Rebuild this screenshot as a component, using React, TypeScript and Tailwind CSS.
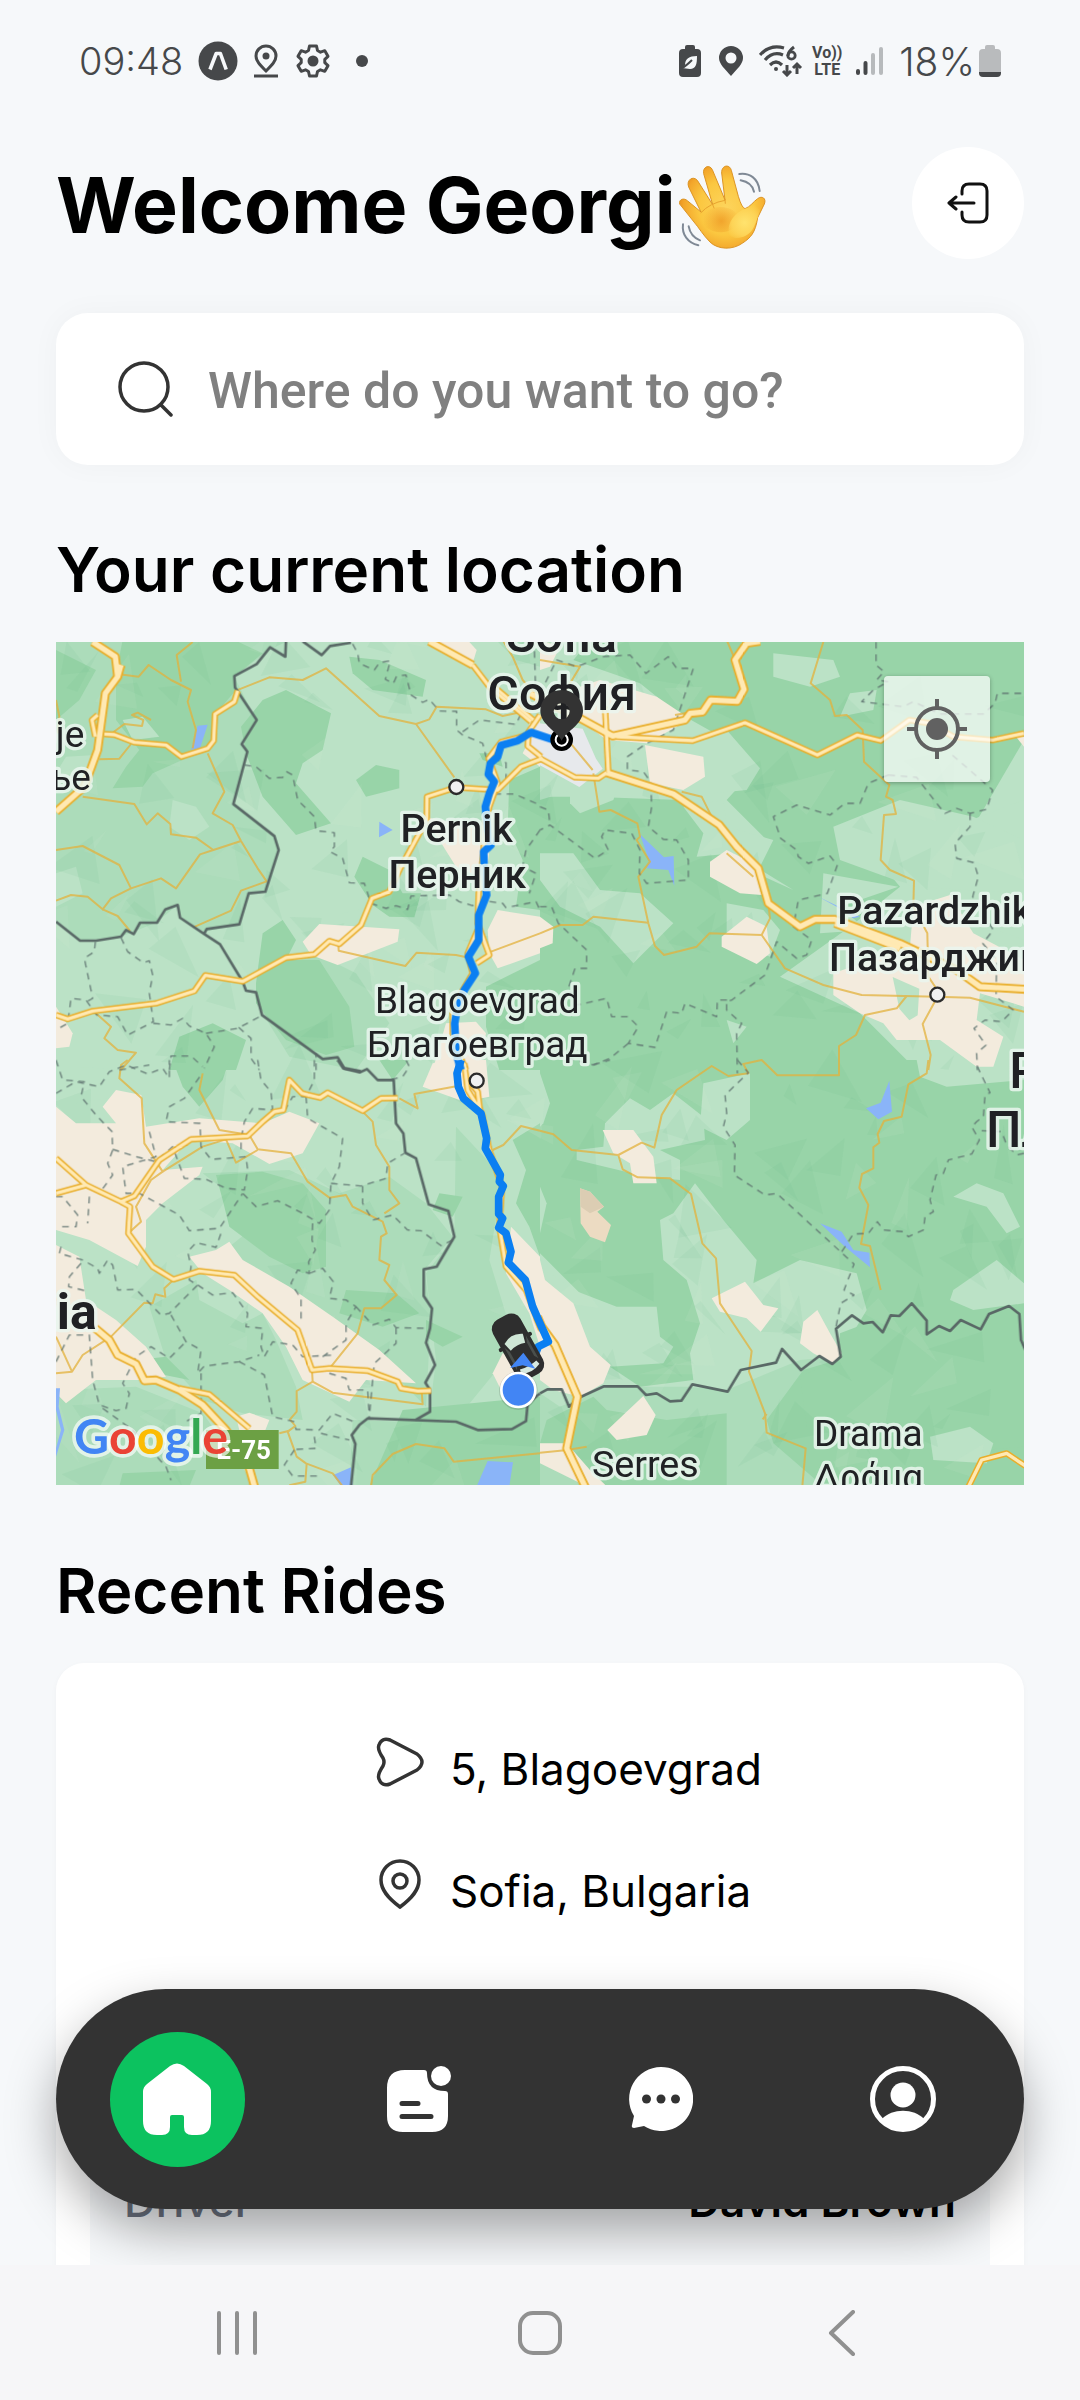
import React from "react";

/* ------------------------------------------------------------------ */
/* Map data: four tiles, each with its own origin, painted layer by layer */
/* ------------------------------------------------------------------ */

type Tile = {
  x: number;
  y: number;
  mid: string[];
  dark: string[];
  light: string[];
  town: string[];
  water: string[];
  minor: string[];
  dashed: string[];
  road: string[];
  highway: string[];
  border: string[];
  route: string[];
};

const tiles: Tile[] = [
  {
    x: 0,
    y: -6,
    mid: [
      "0,0 700,0 640,30 535,110 600,240 560,310 575,335 532,492 655,588 668,630 628,755 578,760 550,853 445,875 370,830 365,795 300,848 195,890 70,902 0,845",
      "1452,0 1320,0 1380,60 1452,80",
      "640,1000 780,940 900,1000 1000,1150 900,1290 700,1250 620,1120",
    ],
    dark: [
      "200,0 535,0 620,40 535,110 540,150 480,220 470,310 390,355 290,400 260,440 170,445 210,380 250,330 180,240 180,100",
      "0,30 120,90 70,180 0,240",
      "555,260 620,180 690,150 825,220 800,330 740,370 720,430 825,550 720,585 620,470 570,340",
      "920,650 1000,690 1040,760 1095,760 1075,832 1000,830 950,795 895,710",
      "620,880 680,840 720,900 690,960 790,960 880,1100 895,1220 810,1245 690,1200 600,1090 600,1030",
      "1360,420 1452,380 1452,810 1380,800 1400,660 1355,560",
      "370,1190 470,1150 570,1200 540,1290 340,1290",
      "880,50 970,60 1110,120 1100,170 950,150 890,100",
      "1290,1040 1452,960 1452,1290 1330,1290 1290,1160",
      "960,375 1030,390 1030,445 930,470 900,420",
      "1270,340 1330,340 1340,380 1280,360",
    ],
    light: [
      "200,240 260,230 310,290 230,300",
      "30,350 120,345 90,430 0,460 0,400",
      "350,480 420,500 460,560 400,600 340,560",
      "0,700 60,680 80,760 0,800",
      "860,820 950,800 990,850 920,880",
    ],
    town: [
      "740,905 790,852 1030,868 1025,905 845,975 765,945",
      "1325,810 1452,830 1452,940 1325,985 1300,940 1295,870",
      "1100,530 1260,560 1300,630 1290,720 1200,680 1150,600",
      "1120,6 1240,6 1262,30 1250,70",
      "0,1100 50,1180 40,1220 0,1225",
      "1170,1150 1260,1145 1290,1180 1270,1290 1130,1290",
      "1452,240 1452,380 1400,340",
    ],
    water: ["425,257 455,254 432,325 405,330", "970,545 1010,570 969,592"],
    minor: [
      "190,103 248,110 278,75 345,120 405,150 395,185 420,270 410,325",
      "410,6 362,45 375,125",
      "540,152 640,112 740,120 810,85 970,228 1080,252 1195,412",
      "1080,252 1120,238 1142,200 1290,208 1340,228 1400,215",
      "165,282 205,252 258,258 262,240 228,225 245,218 285,240",
      "130,358 190,356 225,312",
      "80,470 235,492 272,553 305,520 343,552 345,583 420,593 472,630 555,603",
      "455,340 505,455 470,520 530,555 555,603 605,685 632,724 555,752 525,812 412,862",
      "0,630 80,618 190,675 225,745 165,775 140,808 95,770 45,765 0,782",
      "225,745 315,715 360,745 432,643 472,630",
      "140,808 185,828 222,873",
      "847,912 848,932 1048,978 1082,938 1200,945 1245,955",
      "1305,935 1452,880",
      "120,1120 165,1160 145,1195 185,1230 240,1238 195,1290",
      "1340,0 1370,50 1400,120 1452,180",
      "0,180 10,230 5,280",
    ],
    dashed: [
      "890,12 905,40 910,70 955,90 970,68 1003,62 988,118 1012,130 1022,108 1050,105 1065,165 1100,187 1120,178 1150,213 1202,214 1202,270 1220,285 1280,310 1290,350 1350,368 1350,430 1318,458",
      "1220,275 1270,240 1380,253 1400,210 1440,200 1435,20",
      "565,375 600,380 640,415 680,412 692,395 710,405 725,480 775,530 780,572 835,578 835,620 822,635 860,655 880,728 925,730 945,790 990,805 1020,797 1055,808 1065,768 1180,765 1210,785 1250,797 1270,780 1340,790 1350,803 1440,785 1452,810",
      "1315,462 1375,462 1452,495",
      "1452,570 1410,630 1400,680 1440,700 1420,760",
      "195,893 215,935 262,968 280,962 290,1005 280,1060 292,1145 215,1185 185,1130 122,1125 90,1080 45,1075 35,1150 0,1170",
      "118,905 115,935 85,955 110,1075 92,1085",
      "292,1150 345,1155 380,1135 400,1158 450,1180 475,1220 445,1285",
      "450,1180 545,1165 620,1125",
      "548,1162 585,1195 585,1255 610,1290",
      "340,1290 345,1248 405,1248 440,1280",
      "190,1290 280,1275",
      "780,1290 780,1240",
    ],
    road: [
      "1250,75 1300,140 1425,245",
      "145,282 175,284 235,307 330,315 376,350 455,325 473,302 477,222 535,185 545,152",
      "125,225 108,240 118,290",
      "0,1125 35,1137 110,1113 300,1090 415,1053 448,1006 560,1024 690,953 775,943 820,903 850,912 915,855 948,775 1000,755 1035,680 1112,540 1113,470 1200,442 1325,450 1395,380 1460,355",
      "1455,350 1415,318 1418,275 1452,225",
      "1425,283 1335,306 1298,355 1325,430 1300,500 1285,560 1282,640 1268,760 1265,850 1300,945 1262,970",
      "1265,870 1235,940 1250,1000 1215,1060 1190,1110 1190,1200 1230,1290",
    ],
    highway: [
      "195,75 185,110",
      "110,6 178,50 185,110 148,160 125,330 85,440 0,515",
      "1120,4 1250,75",
    ],
    border: [
      "690,0 688,50 642,22 602,72 535,108 537,142 602,240 557,312 574,335 532,492 655,588 668,630 628,755 578,760 550,853 452,867 445,880",
      "740,4 797,45 822,18 885,8",
      "0,845 72,902 120,902 195,890 210,870 233,882 252,848 303,848 328,808 365,795 372,833 445,882 492,913 560,1025 570,1052 600,1057 618,1125 800,1257 845,1252 865,1285 915,1294",
    ],
    route: [
      "1510,305 1452,286 1425,277 1385,302 1335,316 1325,350 1303,370 1297,403 1315,425 1300,460 1288,500 1295,570 1305,615 1283,635 1285,700 1292,765 1268,825 1268,900 1237,950 1258,1000 1225,1050 1205,1095 1196,1150 1200,1240 1215,1290",
    ],
  },
  {
    x: 1452,
    y: -6,
    mid: [],
    dark: [
      "150,0 640,0 1452,0 1452,300 1300,560 1100,500 980,620 1080,740 930,860 720,1010 960,1120 1040,1200 1130,1290 0,1290 0,470 150,470 420,480 640,700 680,600 560,480 650,380 560,300 400,210 300,130 100,60",
    ],
    light: [
      "0,640 100,640 180,750 300,760 400,850 280,970 180,860 60,800 0,720",
      "430,500 550,480 560,560 700,600 650,700 760,750 580,640 470,650 490,580",
      "320,300 560,270 660,385 620,450 520,460 440,380",
      "1240,560 1452,480 1452,900 1130,780 1150,640",
      "880,560 1080,480 1300,530 1452,600 1452,760 1120,740 900,660",
      "700,40 880,60 900,110 810,140 700,110",
      "560,790 670,810 720,870 690,950 560,900",
      "850,700 1075,740 900,800 980,870 840,880",
      "560,1140 620,1160 580,1210",
      "930,160 1010,150 1000,210 900,230",
      "0,60 130,110 220,280 130,440 0,480",
      "90,440 240,420 220,480 120,520 90,490",
    ],
    town: [
      "180,120 350,170 440,230 410,260 320,310 200,300 120,240 120,140",
      "315,315 490,350 495,410 430,450 330,430",
      "510,665 560,630 640,670 665,765 600,760 510,710",
      "545,890 620,830 680,860 690,940 650,972 545,920",
      "0,830 40,860 38,910 0,925",
      "880,1000 1110,920 1120,800 1230,765 1300,880 1452,960 1452,1100 1320,1060 1310,1140 1390,1190 1360,1280 1310,1280 1200,1200 1070,1200 1030,1150 960,1120 880,1065",
      "1420,280 1452,290 1452,320",
      "0,0 60,20 30,80 0,90",
    ],
    water: [
      "300,583 372,652 401,648 403,738 385,690 320,685 328,665",
      "835,770 960,830 940,835 890,800",
    ],
    minor: [
      "850,6 812,130 870,180 885,228 920,225 968,270 972,365 1048,435 1038,470 1058,480 1068,522 1032,525 1022,660 1050,690 1122,722 1120,800 1162,880 1165,1010 1192,1050",
      "160,400 178,515 212,510 292,550 300,590 290,600 330,665 295,710 325,850 345,918 372,945 470,920 508,880 665,885 690,835 685,790",
      "0,880 60,855 128,855 160,830 325,848",
      "665,885 735,985 850,1035 965,1065 1190,1070 1290,1073 1452,1115",
      "1100,1068 1070,1105 975,1125 948,1185 897,1218 897,1300",
      "1190,1075 1148,1152 1172,1245 1165,1290",
      "50,260 158,390",
      "560,640 640,710",
      "425,455 485,470 515,530",
      "0,60 120,80 60,180",
      "560,0 590,70",
      "405,225 460,215",
    ],
    dashed: [
      "0,160 50,60 110,80 190,50 270,45 318,100 385,50 410,85 460,85 400,270 320,310 262,350 262,390 310,395 332,425 335,500 325,560 370,598 410,600 445,660 445,720 320,730 298,700 300,630 275,580 195,570 185,590 205,630 165,655 30,555 0,570",
      "0,500 25,510 30,555",
      "1008,6 1008,75 1032,95 1010,120 1045,125 1000,150 965,185 1090,200 1120,185 1200,222 1330,222 1365,190 1372,160 1452,160",
      "1045,405 1130,412 1190,490 1215,520 1250,505 1290,520 1340,508 1358,450 1225,335",
      "1045,405 985,430 960,490 915,490 870,525 770,495 700,530 722,595 770,630 775,650 805,670 870,648 892,675 862,760 775,780 760,860 815,900 800,945 770,955 710,905 675,1005 575,1080 560,1085 560,1110 605,1150 590,1180 592,1300",
      "1290,520 1290,560 1245,610 1250,655 1302,668 1315,710 1298,770 1360,870 1328,910 1370,960 1368,1070 1420,1110 1385,1145 1335,1140 1302,1165 1338,1215 1310,1240 1312,1290",
      "0,800 35,800 55,850 140,930 140,985 105,985 85,1045 110,1095 200,1075 215,1130 265,1130 295,1160 265,1210 345,1222 380,1115 425,1120 435,1090 530,1130 532,1080 570,1080",
      "265,1210 210,1255 160,1275 0,1230",
    ],
    road: [
      "-150,130 -20,240",
      "230,290 458,302 615,248 832,345 952,285 1022,302 1108,240 1170,250 1240,290 1358,300 1452,280",
      "195,200 205,395",
      "0,355 105,412 175,415 200,398",
    ],
    highway: [
      "-30,160 60,205 120,235 218,288 435,240 450,220 488,216 512,180 592,184 612,148 585,60 620,10 660,4",
      "885,850 1080,925",
      "200,398 400,462 538,555 590,620 655,685 685,790 780,860 825,838 885,838 1080,910 1250,990 1320,1040 1460,1048",
    ],
    border: [],
    route: [],
  },
  {
    x: 0,
    y: 1254,
    mid: [
      "440,340 700,330 850,400 1000,350 1110,430 1190,530 1105,630 1125,760 1110,1040 930,860 700,740 520,560 620,480",
      "280,740 420,660 620,760 660,840 720,980 740,1080 560,1060 440,1020 330,900",
      "0,990 240,980 440,1060 600,1279 0,1279",
      "1200,200 1340,350 1300,600 1380,860 1200,1080 1120,1060 1140,900 1110,640 1195,530",
      "890,1080 1452,1100 1452,1279 880,1279",
    ],
    dark: [
      "480,345 620,335 740,370 810,450 810,620 740,640 640,590 520,500 500,420",
      "350,0 520,0 500,60 430,140 380,80",
      "870,690 1020,700 1090,760 980,800 850,760",
      "1040,1050 1452,1010 1452,1279 940,1279",
      "1150,400 1220,410 1190,470 1130,450",
      "1110,780 1220,830 1160,860 1110,830",
      "970,0 1060,0 1010,60",
      "1370,240 1452,190 1452,590 1420,500 1380,430 1410,330",
      "240,900 330,890 400,960 300,940",
      "200,1240 420,1230 400,1279 190,1279",
    ],
    light: [
      "60,20 200,30 180,110 60,130",
      "420,650 540,690 620,760 560,790 430,720",
      "640,1130 860,1130 880,1200 720,1279 620,1279",
    ],
    town: [
      "0,140 60,190 180,190 140,140 180,90 256,105 270,200 430,175 620,190 700,155 790,190 740,280 640,312 530,250 400,240 320,330 440,320 430,345 320,430 270,480 270,560 245,618 100,540 0,510",
      "0,555 70,590 90,720 180,780 270,860 330,950 260,960 120,960 30,1030 0,1000",
      "400,590 480,570 520,545 560,600 700,680 830,770 970,870 1080,970 930,960 880,1025 740,960 690,860 620,760 520,690 440,640",
      "1130,10 1190,0 1290,0 1300,110 1225,125 1100,80",
      "540,1070 580,1058 640,1080 620,1130 550,1110",
      "1365,500 1452,590 1452,860 1420,760 1350,640",
      "1340,880 1440,900 1420,990 1340,1000 1310,940",
    ],
    water: [
      "0,985 12,985 8,1040 25,1110 0,1190 0,1165 15,1110 0,1050",
      "832,1245 885,1222 890,1279 855,1279",
      "1295,1203 1371,1207 1360,1279 1262,1279",
    ],
    minor: [
      "215,0 195,15 190,55 257,115 265,250 320,335 285,360 240,440 255,485 222,515",
      "440,40 430,90 490,210 580,225 605,268 705,280 755,365 820,413 870,405 890,440 980,485 992,520 975,530 970,600 1000,615 985,660 1022,705 975,745 925,745 905,820 825,920",
      "1030,115 1085,145 1075,102 1205,78",
      "920,155 950,185 960,255 1000,320 1000,390 1030,430 985,460",
      "320,335 440,260 510,238 540,308 605,270",
      "352,660 325,685 328,710 298,703 290,730 265,728 165,830 80,885 48,935 0,940",
      "0,830 48,935",
      "768,930 770,965 722,993 722,1055 702,1078 718,1098 695,1115 722,1190 750,1210 830,1240 860,1279",
      "770,965 830,998 1100,1033 1097,995",
      "945,1279 950,1245 1010,1182 1080,1152 1165,1165 1193,1205 1452,1180",
      "700,1276 748,1265 752,1212",
      "1310,270 1342,255 1395,198 1452,212",
      "670,1120 700,1112",
    ],
    dashed: [
      "0,0 20,60 85,65 75,110 120,165 168,215 170,270 155,310 170,345 130,400",
      "0,100 60,65 130,80 160,35 210,15 275,42 320,25 340,55 340,0",
      "170,268 240,290 300,305 350,260 385,355 450,358 510,385 565,390 575,330 570,290 465,298 435,260 432,190 330,185 340,140 385,115 435,45",
      "280,215 300,290 200,320 210,400 250,400 370,465 400,512 490,505 560,400",
      "605,0 615,60 645,95 650,150 590,145 565,185 555,240 555,275",
      "775,0 775,60 750,110 710,110 680,160",
      "750,110 755,175 860,235 850,320 825,370 820,450 790,490 740,460 665,422 600,440 560,400",
      "825,370 915,378 990,355 995,310 1045,280",
      "920,378 920,430 950,480 1010,465 1055,510 1095,512 1155,557 1190,540",
      "770,490 768,540 778,570 758,605 760,640 725,630 705,670 735,715 735,790",
      "760,640 800,625 832,665 820,715 870,720 900,740 870,790 870,840 800,890",
      "900,740 950,795 1000,778 1020,803 1115,805",
      "1020,803 1020,850 955,910 950,960 940,1070",
      "0,410 20,410 65,465 60,500 10,500",
      "100,410 95,490",
      "15,560 10,580 80,600 125,625 130,640 155,600 170,615 185,690 240,688 315,765 340,760 425,675 400,660 405,620 395,575 420,548 480,562 500,505",
      "75,610 40,650 38,680 100,695",
      "425,675 470,705 530,698 575,760 570,800 620,805 615,860 625,890 650,845 710,855 740,890 835,885",
      "345,765 390,845 435,870 425,940 445,918 550,905 610,885",
      "0,905 40,825 100,825 110,960 130,1035 180,1052 210,1045 220,1000 200,970 240,890 285,860 340,895 390,845",
      "550,905 625,945 650,1070 715,1085 720,1108 790,1110 830,1060 905,1090",
      "795,1120 880,1140",
      "715,1170 685,1215 710,1248 785,1248",
      "435,940 435,1060 380,1090",
      "140,1045 230,1110 330,1220 345,1260",
      "820,940 870,955 880,990 935,990 940,1075",
      "1050,0 1060,20 1040,50 1000,60",
      "775,1130 780,1165 720,1168",
    ],
    road: [
      "0,400 90,375",
      "0,295 90,375 195,425 235,408 310,300 405,238 575,228 620,185 655,155 682,150 700,60 738,100 792,113 815,98 920,152 975,115 1025,114",
      "195,425 222,440 217,520 290,620 352,658 430,633 535,645 605,710 725,810 768,930 820,925 935,932 1025,965 1035,985 1085,993 1125,992",
      "370,985 460,1003 580,1105",
      "1225,10 1235,90 1278,160",
      "1245,70 1265,95 1272,150",
      "1278,160 1300,270 1338,380 1330,500 1350,620 1410,690 1456,810",
    ],
    highway: ["118,805 160,840 185,885 240,912 265,962 300,960 370,990 440,1035 510,1110 570,1190 597,1285"],
    border: [
      "845,0 862,25 912,37 933,27 965,60 1013,60 1020,190 1042,220 1048,278 1080,295 1118,433 1177,453 1195,530 1142,620 1103,628 1103,708 1128,745 1122,805 1110,848 1137,915 1108,968 1122,990 1122,1055 1078,1080",
      "885,1279 898,1152 887,1125 910,1095 935,1075 1200,1085 1265,1110 1368,1107 1410,1083 1415,1030 1452,1000",
    ],
    route: [
      "1215,0 1203,40 1207,80 1222,115 1275,160 1292,235 1288,265 1333,345 1330,365 1342,378 1328,410 1328,462 1340,475 1328,503 1350,520 1365,575 1357,608 1408,660 1430,740 1452,790 1477,845 1447,860 1437,885 1405,930",
    ],
  },
  {
    x: 1452,
    y: 1254,
    mid: [
      "0,1000 60,1040 200,980 440,980 560,990 780,900 790,1100 840,1279 0,1279",
      "780,900 890,890 780,1000",
    ],
    dark: [
      "0,0 1452,0 1452,1279 850,1279 700,1150 680,1080 790,930 890,900 980,750 950,640 780,600 640,670 650,600 550,480 465,370 400,460 360,480 370,600 440,660 480,790 450,880 460,960 300,980 210,920 150,730 0,580",
      "20,1080 160,1010 200,1050 380,1080 560,1060 560,1279 160,1279 0,1150",
      "900,820 1110,740 1452,740 1452,1160 1200,1180 1000,1100 800,1100 780,950 890,900",
    ],
    light: [
      "195,190 270,115 330,150 400,100 490,170 495,240 360,270 420,300 420,360 320,350 110,300 110,270 190,260",
      "490,70 630,40 630,180 560,240 480,200",
      "0,620 100,690 230,740 350,740 360,830 400,860 370,910 210,920 120,850",
      "1240,690 1370,600 1452,670 1452,730 1300,750 1230,720",
      "1240,410 1310,370 1390,400 1440,500 1400,520 1340,440",
      "1130,0 1452,0 1452,60 1220,80 1140,50",
      "0,40 30,130 10,190 0,200",
      "0,380 20,430 0,520",
      "1170,1130 1290,1100 1360,1150 1340,1210 1180,1200",
    ],
    town: [
      "188,210 280,210 340,290 350,370 280,370 270,310 220,280",
      "515,715 615,665 670,735 715,745 662,815 620,775 540,755",
      "780,850 790,785 832,750 870,820 905,880 880,912 820,880",
      "0,600 15,660 100,730 150,860 212,915 190,970 120,1010 40,990 0,960",
      "202,1110 310,1008 347,1065 320,1125 230,1140",
      "0,1150 80,1150 150,1230 200,1279 140,1279 0,1210",
    ],
    water: [
      "1048,62 1056,155 1015,178 978,145 1022,128",
      "840,490 905,515 940,570 988,578 990,622 915,560",
    ],
    minor: [
      "0,212 40,223 95,270 235,285 305,248 343,263 365,165 410,90 515,18 565,48 625,40 610,12 665,0 712,46 897,46 897,0",
      "235,285 248,328 293,352 390,355 453,402 487,550 528,595 540,730 635,873 627,935 675,1060 680,1118 797,1165 787,1279",
      "1165,0 1160,40 1105,73 1085,170 1032,183 1013,222 1018,248 1000,262 1000,325 966,342 958,383 985,435 963,552 990,558 1022,690",
      "0,1178 80,1170 140,1160",
      "668,1078 680,1062",
    ],
    dashed: [
      "592,0 625,38 555,105 560,160 550,200 585,255 583,345 675,405 710,400 942,612 912,690 942,705 902,730 888,800",
      "905,575 940,522 985,520 1012,485 1030,510 1090,515 1105,530 1150,510 1155,470 1180,455 1170,420 1188,345 1210,340 1225,300 1295,282 1318,240 1295,200 1310,185 1330,170 1335,105 1350,98 1312,20",
      "1325,212 1385,215 1400,255 1430,285 1452,280",
      "160,14 210,0",
    ],
    road: ["1283,1285 1325,1200 1400,1180 1456,1218"],
    highway: ["-8,770 5,800 45,855 112,1010 80,1165 140,1290"],
    border: [
      "0,1000 22,988 65,988 87,1040 120,1012 192,979 293,979 318,1005 350,1000 390,1024 424,1022 457,973 563,995 602,930 708,908 726,867 783,930 838,888 877,912 902,890 888,806 936,766 970,790 998,786 1028,817 1052,766 1078,768 1115,730 1160,782 1160,823 1197,798 1230,813 1262,780 1322,808 1347,762 1407,738 1438,762 1443,840 1456,870",
    ],
    route: [],
  },
];

/* Faint facets that give the ground its relief. */
const relief = (() => {
  let seed = 71;
  const next = () => {
    seed = (seed * 16807) % 2147483647;
    return seed / 2147483647;
  };
  return Array.from({ length: 300 }, () => {
    const x = next() * 2904;
    const y = next() * 2529;
    const s = 30 + next() * 70;
    const pts = [0, 1, 2]
      .map((i) => {
        const a = (i / 3) * Math.PI * 2 + next() * 1.8;
        return `${Math.round(x + Math.cos(a) * s)},${Math.round(y + Math.sin(a) * s)}`;
      })
      .join(" ");
    return { pts, dark: next() > 0.35 };
  });
})();

type LayerName = Exclude<keyof Tile, "x" | "y">;

function Areas({ name, fill }: { name: LayerName; fill: string }) {
  return (
    <g fill={fill}>
      {tiles.map((t) => (
        <g key={`${t.x}-${t.y}`} transform={`translate(${t.x} ${t.y})`}>
          {t[name].map((p) => (
            <polygon key={p} points={p} />
          ))}
        </g>
      ))}
    </g>
  );
}

function Lines({ name, color, width, dash, opacity }: { name: LayerName; color: string; width: number; dash?: string; opacity?: number }) {
  return (
    <g fill="none" stroke={color} strokeWidth={width} strokeDasharray={dash} opacity={opacity} strokeLinejoin="round">
      {tiles.map((t) => (
        <g key={`${t.x}-${t.y}`} transform={`translate(${t.x} ${t.y})`}>
          {t[name].map((p) => (
            <polyline key={p} points={p} />
          ))}
        </g>
      ))}
    </g>
  );
}

const labels: { text: string; x: number; y: number; size: number; weight: number; anchor: "start" | "middle" | "end" }[] = [
  { text: "Sofia", x: 1517, y: 30, size: 145, weight: 500, anchor: "middle" },
  { text: "София", x: 1517, y: 203, size: 145, weight: 500, anchor: "middle" },
  { text: "Pernik", x: 1202, y: 599, size: 118, weight: 500, anchor: "middle" },
  { text: "Перник", x: 1204, y: 739, size: 118, weight: 500, anchor: "middle" },
  { text: "Blagoevgrad", x: 1264, y: 1114, size: 111, weight: 400, anchor: "middle" },
  { text: "Благоевград", x: 1264, y: 1246, size: 111, weight: 400, anchor: "middle" },
  { text: "Pazardzhik", x: 2344, y: 846, size: 118, weight: 500, anchor: "start" },
  { text: "Пазарджик", x: 2319, y: 986, size: 118, weight: 500, anchor: "start" },
  { text: "Plovdiv", x: 2860, y: 1339, size: 150, weight: 500, anchor: "start" },
  { text: "Пловдив", x: 2790, y: 1514, size: 150, weight: 500, anchor: "start" },
  { text: "Skopje", x: 85, y: 314, size: 111, weight: 400, anchor: "end" },
  { text: "Скопье", x: 105, y: 444, size: 111, weight: 400, anchor: "end" },
  { text: "Macedonia", x: 122, y: 2060, size: 150, weight: 700, anchor: "end" },
  { text: "Serres", x: 1768, y: 2505, size: 113, weight: 400, anchor: "middle" },
  { text: "Drama", x: 2437, y: 2412, size: 111, weight: 400, anchor: "middle" },
  { text: "Δράμα", x: 2437, y: 2545, size: 111, weight: 400, anchor: "middle" },
];

const cities = [
  { x: 1201, y: 435 },
  { x: 1262, y: 1316 },
  { x: 2644, y: 1058 },
];

const googleLetters = [
  { c: "G", fill: "#4285f4" },
  { c: "o", fill: "#ea4335" },
  { c: "o", fill: "#fbbc04" },
  { c: "g", fill: "#4285f4" },
  { c: "l", fill: "#34a853" },
  { c: "e", fill: "#ea4335" },
];

function RouteMap() {
  return (
    <svg viewBox="0 0 2904 2529" preserveAspectRatio="xMidYMid slice" className="block h-full w-full" role="img" aria-label="Map of the route from Petrich to Sofia">
      <rect width="2904" height="2529" fill="#bbe2c6" />
      <Areas name="mid" fill="#acdcba" />
      <Areas name="dark" fill="#98d4a8" />
      <Areas name="light" fill="#bbe2c6" />
      <g>
        {relief.map((r) => (
          <polygon key={r.pts} points={r.pts} fill={r.dark ? "#5fae7c" : "#d6f0d8"} opacity={r.dark ? 0.08 : 0.1} />
        ))}
      </g>
      <Areas name="town" fill="#f3ebdd" />
      <g transform="translate(1452 1254)">
        <polygon points="120,385 150,395 192,440 172,455 213,495 195,547 150,530 122,490" fill="#ecdbc2" />
        <polygon points="120,385 150,395 192,440 150,460 122,440" fill="#dccdb3" />
      </g>
      <polygon points="1420,240 1580,260 1620,350 1640,380 1570,435 1452,370 1410,310" fill="#e7e9ec" />
      <polygon points="2510,1005 2590,1040 2585,1120 2560,1135 2530,1100" fill="#bbe2c6" />
      <Areas name="water" fill="#8ab4f8" />
      <Lines name="minor" color="#e3b23c" width={6} opacity={0.75} />
      <Lines name="dashed" color="#5f7370" width={4} dash="20 17" opacity={0.9} />
      <Lines name="border" color="#596866" width={8} />
      <Lines name="road" color="#e9ae2b" width={19} />
      <Lines name="highway" color="#e9ae2b" width={27} />
      <Lines name="road" color="#ffe9b3" width={10} />
      <Lines name="highway" color="#ffe9b3" width={16} />
      <Lines name="route" color="#0b7ff2" width={23} />

      {cities.map((c) => (
        <circle key={c.x} cx={c.x} cy={c.y} r="21" fill="#f1f1f1" stroke="#2b2b2b" strokeWidth="7" />
      ))}

      <rect x="450" y="2364" width="218" height="117" fill="#6ca044" />
      <text x="563" y="2451" textAnchor="middle" fontFamily="Roboto" fontWeight="700" fontSize="78" fill="#fff">
        E-75
      </text>

      <g fontFamily="Roboto, sans-serif" fill="#202124" stroke="#eaf6ee" strokeWidth="20" strokeLinejoin="round" paintOrder="stroke">
        {labels.map((l) => (
          <text key={l.text} x={l.x} y={l.y} fontSize={l.size} fontWeight={l.weight} textAnchor={l.anchor} strokeOpacity="0.85">
            {l.text}
          </text>
        ))}
      </g>

      {/* destination */}
      <circle cx="1517" cy="293" r="27" fill="none" stroke="#000" strokeWidth="14" />
      <circle cx="1517" cy="293" r="18" fill="#000" stroke="#fff" strokeWidth="6" />
      <path
        fillRule="evenodd"
        fill="#333"
        d="M1517 296c-10-26-64-48-64-90a64 62 0 0 1 128 0c0 42-54 64-64 90zM1517 184a24 24 0 1 0 0 48 24 24 0 0 0 0-48z"
      />

      {/* car */}
      <g transform="translate(1386 2114) rotate(-29) scale(1.12)">
        <rect x="-42" y="-90" width="84" height="180" rx="28" fill="#2e2e2e" />
        <rect x="-50" y="-20" width="100" height="11" rx="5" fill="#2e2e2e" />
        <path d="M-28-24Q0-42 28-24L22 0Q0-8-22 0z" fill="#cfe6d6" />
        <path d="M-25 56Q0 62 25 56L28 68Q0 82-28 68z" fill="#d7e9e0" />
        <path d="M-33-16l7 18v40l-7 12zM33-16l-7 18v40l7 12z" fill="#4a4f4c" />
      </g>
      <path d="M1402 2132L1438 2180 1400 2170 1362 2178z" fill="#4285f4" />
      <circle cx="1387" cy="2246" r="58" fill="#000" opacity="0.12" />
      <circle cx="1387" cy="2244" r="51" fill="#4285f4" stroke="#fff" strokeWidth="8" />

      <text x="54" y="2436" fontFamily="Lato" fontWeight="700" fontSize="145" stroke="#fff" strokeOpacity="0.65" strokeWidth="22" strokeLinejoin="round" paintOrder="stroke">
        {googleLetters.map((g, i) => (
          <tspan key={i} fill={g.fill}>
            {g.c}
          </tspan>
        ))}
      </text>
    </svg>
  );
}

/* ------------------------------------------------------------------ */
/* Icons                                                                */
/* ------------------------------------------------------------------ */

function WavingHand() {
  return (
    <svg viewBox="14 16 276 264" className="mt-2 h-[88px] w-[92px] shrink-0" role="img" aria-label="Waving hand">
      <defs>
        <radialGradient id="palm" gradientUnits="userSpaceOnUse" cx="165" cy="150" r="150">
          <stop offset="0" stopColor="#fdd45c" />
          <stop offset="0.55" stopColor="#fbc740" />
          <stop offset="0.85" stopColor="#f3a62b" />
          <stop offset="1" stopColor="#e58a1c" />
        </radialGradient>
        <radialGradient id="thumb" gradientUnits="userSpaceOnUse" cx="220" cy="195" r="62">
          <stop offset="0" stopColor="#ffe36e" />
          <stop offset="0.6" stopColor="#fdd457" />
          <stop offset="1" stopColor="#fdd457" stopOpacity="0" />
        </radialGradient>
        <radialGradient id="crease" gradientUnits="userSpaceOnUse" cx="150" cy="190" r="55">
          <stop offset="0" stopColor="#ef9d26" stopOpacity="0.85" />
          <stop offset="1" stopColor="#ef9d26" stopOpacity="0" />
        </radialGradient>
      </defs>
      <path
        d="M25 139C22 124 38 120 48 129L89 163 52 88C44 67 65 53 78 68L124 141 97 48C93 27 115 19 123 36L161 127 151 46C150 22 175 18 180 38L201 116Q211 150 221 153C236 148 246 132 259 123 272 113 286 122 279 139L259 180C252 226 238 240 214 256 184 278 139 276 116 253 95 232 82 209 68 193z"
        fill="url(#palm)"
        stroke="#dc9526"
        strokeWidth="3"
        strokeLinejoin="round"
      />
      <path d="M89 165Q115 136 161 128M124 141l4 10M161 127l1 10" fill="none" stroke="#e8a42f" strokeWidth="3" strokeLinecap="round" />
      <ellipse cx="148" cy="186" rx="55" ry="38" fill="url(#crease)" />
      <path d="M221 153C190 165 168 195 172 225 180 250 225 245 244 215 258 190 268 150 278 128 262 122 240 150 221 153z" fill="url(#thumb)" />
      <g fill="none" stroke="#7f8995" strokeLinecap="round" strokeWidth="6">
        <path d="M204 49c30-4 57 12 61 51M208 68c22 4 36 16 40 34" />
        <path d="M35 200c-4 30 14 56 46 63M52 206c4 22 14 34 34 42" />
      </g>
    </svg>
  );
}

const statusColor = "#46484a";

function ExpoIcon() {
  return (
    <svg viewBox="0 0 40 40" className="size-10" aria-hidden="true">
      <circle cx="20" cy="20" r="19.5" fill={statusColor} />
      <path d="M12 28.500L18.200 12.500h4.200L28.200 28.500" fill="none" stroke="#f6f8fa" strokeWidth="3.600" strokeLinejoin="round" />
      <path d="M20.200 15l-4.500 12 4.500-5 4.500 5z" fill={statusColor} />
    </svg>
  );
}

function PinLineIcon() {
  return (
    <svg viewBox="0 0 24 34" className="h-[34px] w-6" fill="none" stroke={statusColor} strokeWidth="3" aria-hidden="true">
      <path d="M12 27C6 21 2 17 2 12a10 10 0 0 1 20 0c0 5-4 9-10 15z" />
      <circle cx="12" cy="12" r="3.500" fill={statusColor} stroke="none" />
      <path d="M0 32h24" />
    </svg>
  );
}

function GearIcon() {
  return (
    <svg viewBox="0 0 34 34" className="size-[34px]" aria-hidden="true">
      <path
        d="M13.500 2h7l1 4.500 3 1.700 4.300-1.500 3.200 5.600-3.200 3v3.400l3.200 3-3.200 5.600-4.300-1.500-3 1.700-1 4.500h-7l-1-4.500-3-1.700-4.300 1.500L2 21.700l3.200-3v-3.400L2 12.300l3.200-5.600 4.300 1.500 3-1.700z"
        fill="none"
        stroke={statusColor}
        strokeWidth="3"
        strokeLinejoin="round"
      />
      <circle cx="17" cy="17" r="5.500" fill={statusColor} />
    </svg>
  );
}

function StatusBar() {
  return (
    <div className="flex h-[122px] shrink-0 items-center justify-between pr-[79px] pl-[79px] text-[#46484a]">
      <div className="flex items-center">
        <span className="w-[119px] font-[Inter] text-[38px] leading-none font-light">09:48</span>
        <ExpoIcon />
        <span className="ml-4 flex"><PinLineIcon /></span>
        <span className="ml-[18px] flex"><GearIcon /></span>
        <span className="ml-[26px] size-3 rounded-full bg-[#46484a]" />
      </div>
      <div className="flex items-center">
        <svg viewBox="0 0 22 32" className="h-8 w-[22px]" aria-hidden="true">
          <path d="M6 4V2q0-2 2-2h6q2 0 2 2v2h2q4 0 4 4v20q0 4-4 4H4q-4 0-4-4V8q0-4 4-4z" fill={statusColor} />
          <path d="M18 11c-8 0-12 3-12 9-1 2-3 3-3 3l8 1c6 0 7-5 7-13z" fill="#f6f8fa" />
          <path d="M13 15c-3 3-6 6-10 8" fill="none" stroke={statusColor} strokeWidth="2" />
        </svg>
        <svg viewBox="0 0 24 30" className="ml-[18px] h-[30px] w-6" aria-hidden="true">
          <path fillRule="evenodd" d="M12 30C6 23 0 18 0 12a12 12 0 0 1 24 0c0 6-6 11-12 18zM12 6.500a5.500 5.500 0 1 0 0 11 5.500 5.500 0 0 0 0-11z" fill={statusColor} />
        </svg>
        <svg viewBox="0 0 44 32" className="ml-4 h-8 w-11" fill="none" stroke={statusColor} strokeWidth="3.200" aria-hidden="true">
          <path d="M1 10C9 1 18 1 25 3M6 15c6-7 13-7 18-5M11 20c4-4 8-4 12 0" />
          <circle cx="17" cy="24" r="2" fill={statusColor} stroke="none" />
          <path d="M35 2c-4 3-6 6-6 9" strokeWidth="3" />
          <circle cx="32.500" cy="10.500" r="3.700" strokeWidth="2.800" />
          <path d="M28 20v10M24 26l4 4 4-4M38 29V19M34 23l4-4 4 4" strokeWidth="3" />
        </svg>
        <span className="ml-2 flex w-8 flex-col items-center font-[Roboto] text-[16px] leading-[17px] font-bold">
          <span>Vo))</span>
          <span>LTE</span>
        </span>
        <svg viewBox="0 0 28 30" className="ml-3 h-[30px] w-7" strokeWidth="4" strokeLinecap="round" aria-hidden="true">
          <path d="M3 25v2M10.500 17v10" stroke={statusColor} />
          <path d="M18 9v18M26 3v24" stroke="#b7babc" />
        </svg>
        <span className="ml-4 font-[Inter] text-[39px] leading-none font-light">18%</span>
        <svg viewBox="0 0 22 32" className="ml-1 h-8 w-[22px]" aria-hidden="true">
          <path d="M6 4V2q0-2 2-2h6q2 0 2 2v2h2q4 0 4 4v19H0V8q0-4 4-4z" fill="#b9bbbd" />
          <path d="M0 27h22v1q0 4-4 4H4q-4 0-4-4z" fill={statusColor} />
        </svg>
      </div>
    </div>
  );
}

function LogoutIcon() {
  return (
    <svg viewBox="0 0 42 42" className="size-[42px]" fill="none" stroke="#111" strokeWidth="3" strokeLinecap="round" strokeLinejoin="round" aria-hidden="true">
      <path d="M15 12V9q0-7 7-7h11q7 0 7 7v24q0 7-7 7H22q-7 0-7-7v-3M27 21H2M9 15l-7 6 7 6" />
    </svg>
  );
}

function SearchIcon() {
  return (
    <svg viewBox="0 0 56 56" className="size-14 shrink-0" fill="none" stroke="#333" strokeWidth="3.500" strokeLinecap="round" aria-hidden="true">
      <circle cx="26" cy="26" r="24" />
      <path d="M43 44l10 10" />
    </svg>
  );
}

function TargetIcon() {
  return (
    <svg viewBox="0 0 60 60" className="size-[60px]" fill="none" stroke="#616161" strokeWidth="4" aria-hidden="true">
      <circle cx="30" cy="30" r="21" />
      <circle cx="30" cy="30" r="11" fill="#616161" stroke="none" />
      <path d="M30 0v10M30 50v10M0 30h10M50 30h10" />
    </svg>
  );
}

function HomeIcon() {
  return (
    <svg viewBox="0 0 70 72" className="h-[72px] w-[70px]" fill="#fff" aria-hidden="true">
      <path d="M28 3q7-5 14 0l23 18q4 3 4 8v29q0 14-14 14h-5q-8 0-8-8V54q0-2-2-2H30q-2 0-2 2v10q0 8-8 8h-5Q1 72 1 58V29q0-5 4-8z" />
    </svg>
  );
}

function NewsIcon() {
  return (
    <svg viewBox="0 0 64 66" className="h-[66px] w-16" aria-hidden="true">
      <path d="M18 4h19q3 0 3 3 0 18 18 18 3 0 3 3v22q0 16-16 16H16Q0 66 0 50V22Q0 4 18 4z" fill="#fff" />
      <circle cx="54" cy="10" r="10" fill="#fff" />
      <path d="M15 37.500h16M15 50.500h29" stroke="#333" strokeWidth="5" strokeLinecap="round" />
    </svg>
  );
}

function ChatIcon() {
  return (
    <svg viewBox="0 0 64 66" className="h-[66px] w-16" aria-hidden="true">
      <path d="M32 1a32 32 0 1 1-17 59l-10 2q-3 0-2-3l2-9A32 32 0 0 1 32 1z" fill="#fff" />
      <g fill="#333">
        <circle cx="17.500" cy="33" r="4.500" />
        <circle cx="32" cy="33" r="4.500" />
        <circle cx="46.500" cy="33" r="4.500" />
      </g>
    </svg>
  );
}

function ProfileIcon() {
  return (
    <svg viewBox="0 0 66 66" className="size-[66px]" aria-hidden="true">
      <circle cx="33" cy="33" r="30.500" fill="none" stroke="#fff" strokeWidth="5" />
      <circle cx="33" cy="29" r="12.500" fill="#fff" />
      <path d="M12 53C22 42 44 42 54 53 44 66 22 66 12 53z" fill="#fff" />
    </svg>
  );
}

/* ------------------------------------------------------------------ */
/* Screen                                                               */
/* ------------------------------------------------------------------ */

function TabBar() {
  return (
    <nav
      aria-label="Main"
      className="absolute inset-x-14 bottom-14 grid h-[220px] grid-cols-4 place-items-center rounded-full bg-[#333] shadow-[0_22px_50px_rgba(0,0,0,0.34)]"
    >
      <button aria-label="Home" aria-current="page" className="flex size-[135px] items-center justify-center rounded-full bg-[#0cc25f]">
        <HomeIcon />
      </button>
      <button aria-label="Rides" className="flex size-[135px] items-center justify-center">
        <NewsIcon />
      </button>
      <button aria-label="Chat" className="flex size-[135px] items-center justify-center">
        <ChatIcon />
      </button>
      <button aria-label="Profile" className="flex size-[135px] items-center justify-center">
        <ProfileIcon />
      </button>
    </nav>
  );
}

function RideCard() {
  return (
    <article className="rounded-[28px] bg-white px-[34px] pt-[66px] shadow-[0_2px_6px_rgba(0,0,0,0.03)]">
      <div className="ml-[286px] flex flex-col gap-[50px] text-[44px] leading-[64px]">
        <div className="flex gap-[26px]">
          <svg viewBox="0 0 48 50" className="mt-2 h-[50px] w-12 shrink-0" fill="none" stroke="#333" strokeWidth="3.500" strokeLinejoin="round" aria-hidden="true">
            <path d="M14 3L41 17q10 8 0 16L14 47Q6 50 3 42 1 38 7 29q2-4 0-8Q1 12 3 8 6 0 14 3z" />
          </svg>
          <span className="pt-2">5, Blagoevgrad</span>
        </div>
        <div className="flex gap-[26px]">
          <svg viewBox="0 0 48 50" className="mt-2 h-[50px] w-12 shrink-0" fill="none" stroke="#333" strokeWidth="3.500" aria-hidden="true">
            <path d="M24 48C12 39 5 31 5 21a19 19 0 0 1 38 0c0 10-7 18-19 27z" />
            <circle cx="24" cy="22" r="7" />
          </svg>
          <span className="pt-2">Sofia, Bulgaria</span>
        </div>
      </div>
      <dl className="mt-[94px] bg-[#f6f8fa] px-[34px] text-[44px] leading-[64px]">
        <div className="flex justify-between pt-[44px]">
          <dt className="font-medium text-[#6b7280]">Date</dt>
          <dd className="font-semibold">Today</dd>
        </div>
        <div className="flex justify-between pt-[44px] pb-[88px]">
          <dt className="font-medium text-[#6b7280]">Driver</dt>
          <dd className="font-semibold">David Brown</dd>
        </div>
      </dl>
    </article>
  );
}

function SystemNav() {
  return (
    <div className="flex h-[135px] shrink-0 items-center justify-between bg-[#f6f6f8] px-[212px]">
      <button aria-label="Recent apps">
        <svg viewBox="0 0 50 44" className="h-11 w-[50px]" stroke="#909090" strokeWidth="4" strokeLinecap="round" aria-hidden="true">
          <path d="M7 2v40M25 2v40M43 2v40" />
        </svg>
      </button>
      <button aria-label="Home screen">
        <svg viewBox="0 0 44 44" className="size-11" fill="none" stroke="#909090" strokeWidth="4" aria-hidden="true">
          <rect x="2" y="2" width="40" height="40" rx="13" />
        </svg>
      </button>
      <button aria-label="Back">
        <svg viewBox="0 0 50 46" className="h-[46px] w-[50px]" fill="none" stroke="#909090" strokeWidth="4" strokeLinecap="round" strokeLinejoin="round" aria-hidden="true">
          <path d="M35 2L13 23l22 21" />
        </svg>
      </button>
    </div>
  );
}

export default function App() {
  return (
    <div className="flex h-screen flex-col overflow-hidden bg-[#f6f8fa] font-[Inter] text-black">
      <StatusBar />
      <div className="relative min-h-0 flex-1 overflow-hidden">
        <main className="px-14 pt-[23px]">
          <header className="flex items-center justify-between">
            <div className="flex items-center">
              <h1 className="pt-1 text-[77px] leading-[112px] font-bold whitespace-nowrap">Welcome Georgi</h1>
              <WavingHand />
            </div>
            <button aria-label="Sign out" className="flex size-28 items-center justify-center rounded-full bg-white">
              <LogoutIcon />
            </button>
          </header>

          <label className="mt-[52px] flex h-[152px] items-center rounded-[32px] bg-white pl-[62px] shadow-[0_0_30px_rgba(0,0,0,0.035)]">
            <SearchIcon />
            <span className="sr-only">Destination</span>
            <input
              type="text"
              placeholder="Where do you want to go?"
              className="mr-10 ml-[34px] min-w-0 flex-1 bg-transparent pt-1 font-[Roboto] text-[50px] font-medium outline-none placeholder:text-[#808080]"
            />
          </label>

          <section>
            <h2 className="mt-[67px] text-[62px] leading-[76px] font-semibold">Your current location</h2>
            <div className="relative mt-[34px] h-[843px] overflow-hidden">
              <RouteMap />
              <button
                aria-label="Show my location"
                className="absolute top-[34px] right-[34px] flex size-[106px] items-center justify-center rounded-[4px] bg-white/70 shadow-[0_1px_4px_rgba(0,0,0,0.3)]"
              >
                <TargetIcon />
              </button>
            </div>
          </section>

          <section>
            <h2 className="mt-[68px] text-[62px] leading-[76px] font-semibold">Recent Rides</h2>
            <div className="mt-[34px]">
              <RideCard />
            </div>
          </section>
        </main>
        <TabBar />
      </div>
      <SystemNav />
    </div>
  );
}
